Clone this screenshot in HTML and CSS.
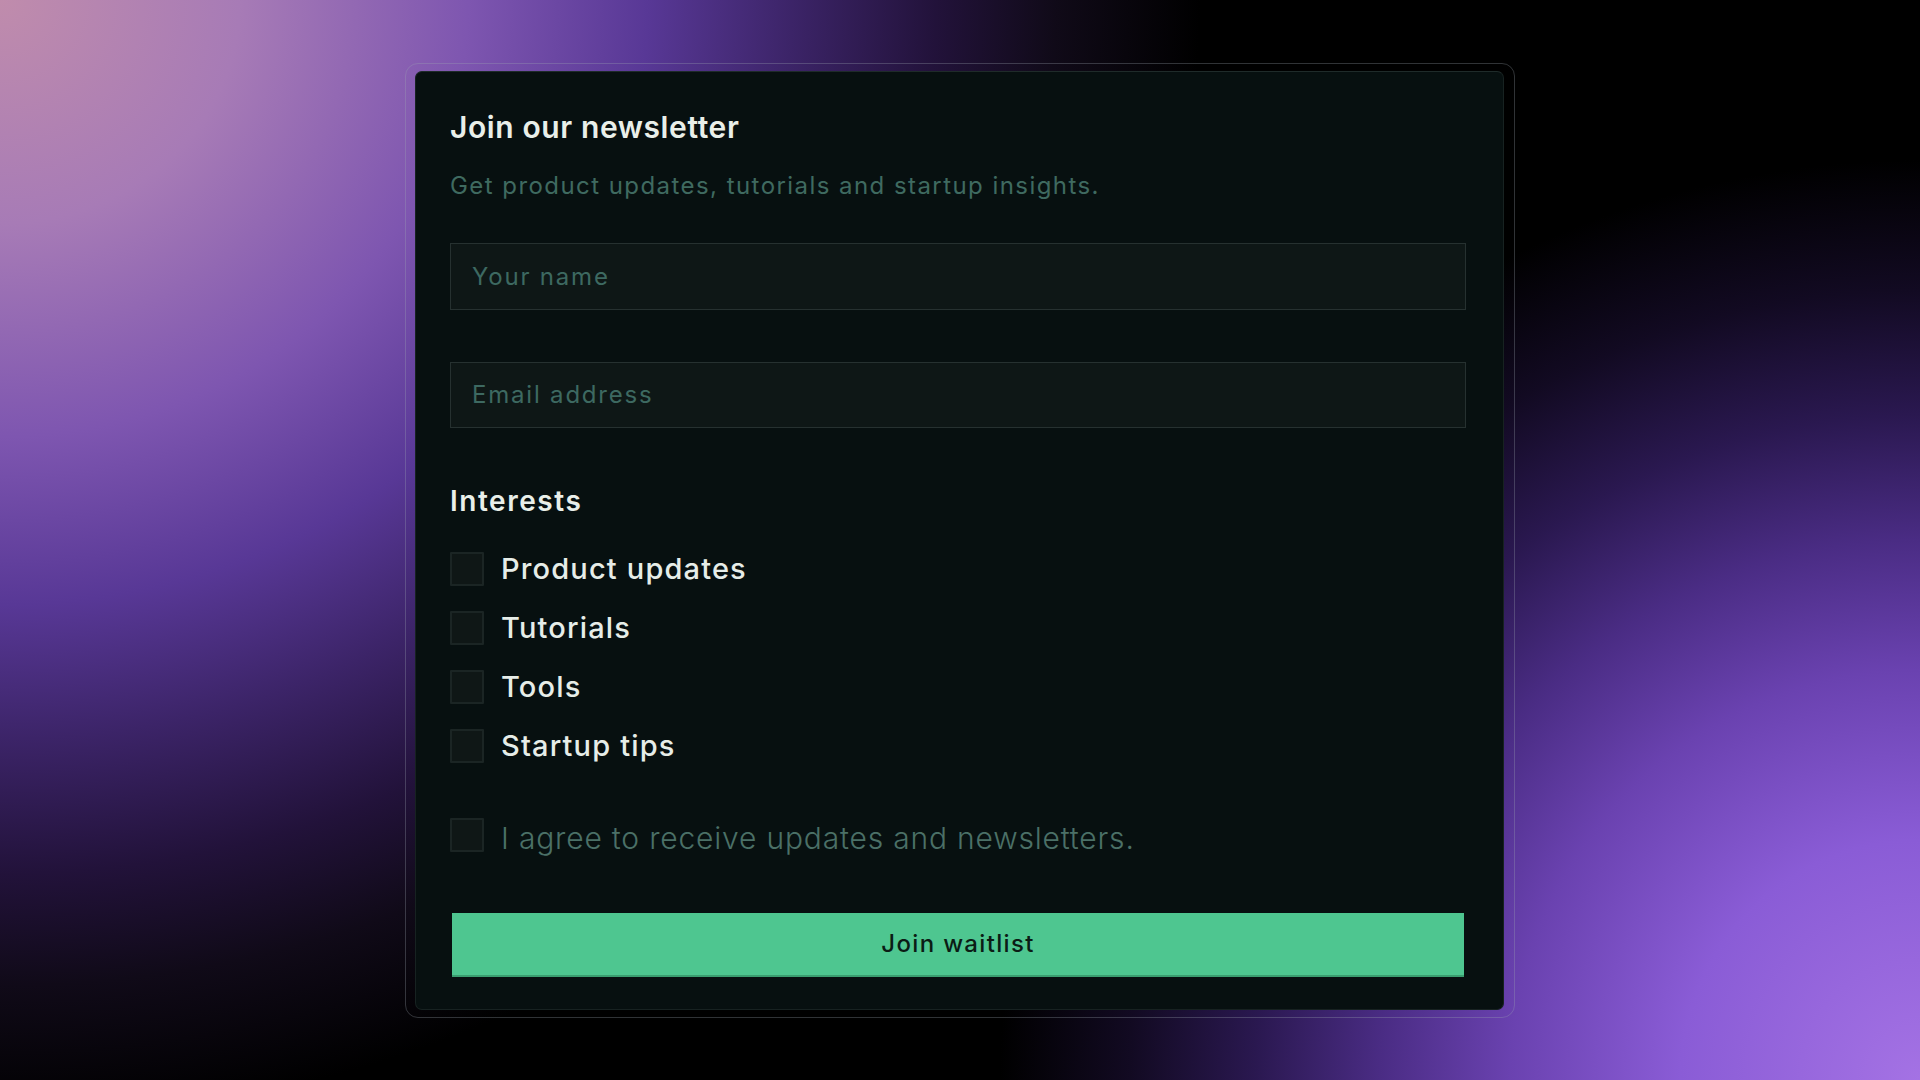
FILE: index.html
```html
<!DOCTYPE html>
<html lang="en">
<head>
<meta charset="utf-8">
<title>Join our newsletter</title>
<link rel="stylesheet" href="styles.css">
</head>
<body>
<main class="frame">
  <form class="card">
    <h1 class="title">Join our newsletter</h1>
    <p class="subtitle">Get product updates, tutorials and startup insights.</p>
    <input class="field field-name" type="text" placeholder="Your name">
    <input class="field field-email" type="email" placeholder="Email address">
    <h2 class="section">Interests</h2>
    <div class="options">
      <label class="option"><span class="box"></span><span class="option-text">Product updates</span></label>
      <label class="option"><span class="box"></span><span class="option-text">Tutorials</span></label>
      <label class="option"><span class="box"></span><span class="option-text">Tools</span></label>
      <label class="option"><span class="box"></span><span class="option-text">Startup tips</span></label>
    </div>
    <label class="agree"><span class="box"></span><span class="agree-text">I agree to receive updates and newsletters.</span></label>
    <button class="submit" type="button">Join waitlist</button>
  </form>
</main>
</body>
</html>
```
FILE: styles.css
```css
* { box-sizing: border-box; }

html, body {
  margin: 0;
  height: 100%;
}

body {
  font-family: Inter, "Noto Sans", "DejaVu Sans", sans-serif;
  background-color: #000;
  background-image:
    radial-gradient(ellipse 1200px 1120px at 0 0, #c08cac 0, #a77bb6 20%, #7e56b0 39%, #583896 54%, #3c2468 66%, #22123a 78%, #100a18 88%, rgba(0,0,0,0) 100%),
    radial-gradient(circle at 100% 100%, #a472e4 0, #8a5cd6 240px, #6a42b0 410px, #4a2c84 540px, #2a1850 665px, #120a22 790px, rgba(0,0,0,0) 920px);
  display: flex;
  align-items: center;
  justify-content: center;
  overflow: hidden;
}

.frame {
  width: 1110px;
  padding: 7px 10px 7px 9px;
  border: 1px solid rgba(160, 170, 180, 0.3);
  border-radius: 13px;
}

.card {
  display: flex;
  flex-direction: column;
  background: #071010;
  border: 1px solid #172221;
  border-top-color: #1f2b2a;
  border-radius: 7px;
  padding: 37px 37px 32px 34px;
  margin: 0;
}

.title {
  margin: 0;
  font-size: 30px;
  line-height: 36px;
  font-weight: 600;
  letter-spacing: 0.02em;
  color: #e9efe9;
}

.subtitle {
  margin: 27px 0 0;
  font-size: 24px;
  line-height: 28px;
  font-weight: 400;
  letter-spacing: 0.06em;
  color: #3f6a60;
}

.field {
  display: block;
  width: 100%;
  height: 67px;
  margin: 43px 0 0;
  padding: 0 21px;
  background: #0e1716;
  border: 1px solid #263130;
  border-radius: 0;
  font-family: inherit;
  font-size: 24px;
  letter-spacing: 0.075em;
  color: #d8e4de;
  outline: none;
}

.field-email {
  height: 66px;
  margin-top: 52px;
}

.field::placeholder {
  color: #3d6961;
  opacity: 1;
}

.section {
  margin: 57px 0 0;
  font-size: 28px;
  line-height: 32px;
  font-weight: 600;
  letter-spacing: 0.055em;
  color: #e9efe9;
}

.options {
  display: flex;
  flex-direction: column;
  gap: 25px;
  margin-top: 35px;
}

.option {
  display: flex;
  align-items: center;
  height: 34px;
  gap: 17px;
}

.box {
  flex: none;
  width: 34px;
  height: 34px;
  background: #0f1716;
  border: 2px solid #1b2524;
  border-radius: 1px;
}

.option-text {
  font-size: 29px;
  line-height: 34px;
  font-weight: 500;
  letter-spacing: 0.04em;
  color: #e6ede8;
}

.agree {
  display: flex;
  align-items: flex-start;
  gap: 17px;
  height: 34px;
  margin-top: 55px;
}

.agree-text {
  margin-top: 3px;
  font-size: 30px;
  line-height: 34px;
  font-weight: 300;
  letter-spacing: 0.027em;
  color: #4b7067;
  white-space: nowrap;
}

.submit {
  display: block;
  height: 64px;
  margin: 61px 2px 0;
  background: #4ec690;
  border: none;
  border-bottom: 2px solid #3a9e70;
  border-radius: 0;
  font-family: inherit;
  font-size: 24px;
  font-weight: 500;
  letter-spacing: 0.055em;
  color: #0b1c15;
  cursor: pointer;
}
```
